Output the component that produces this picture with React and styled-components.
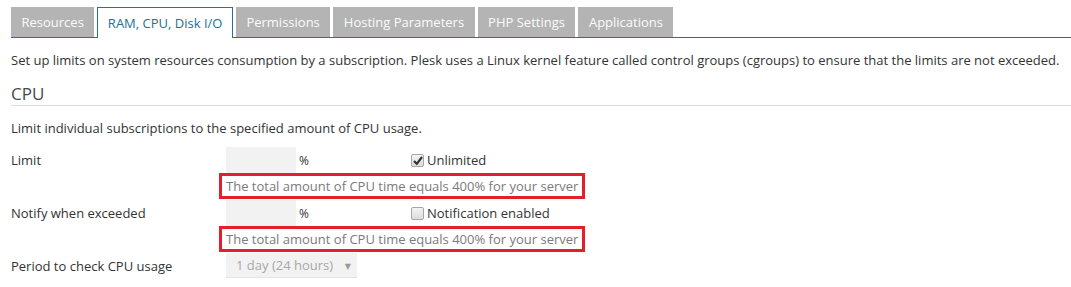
import React from 'react';
import styled, { createGlobalStyle } from 'styled-components';

const GlobalStyle = createGlobalStyle`
	body {
		margin: 0;
		background: #fff;
		font-family: "Open Sans", "DejaVu Sans", sans-serif;
		font-size: 13px;
		color: #333;
	}
`;

const Page = styled.div`
	padding: 7px 0 0 11px;
`;

const TabBar = styled.div`
	display: flex;
	gap: 3px;
	border-bottom: 1px solid #24729c;
	height: 30px;
`;

const Tab = styled.div`
	box-sizing: border-box;
	display: flex;
	align-items: center;
	font-size: 13px;
	white-space: nowrap;
	background: ${({ active }) => (active ? '#fff' : '#b4b4b4')};
	color: ${({ active }) => (active ? '#21709a' : '#fbfbfb')};
	border: ${({ active }) => (active ? '1px solid #24729c' : 'none')};
	border-bottom: none;
	height: ${({ active }) => (active ? '31px' : '30px')};
	padding: ${({ active }) => (active ? '0 9.5px' : '0 10.5px')};
`;

const Intro = styled.p`
	margin: 13px 0 0;
	line-height: 18px;
`;

const Heading = styled.h2`
	margin: 13px 0 0;
	font-size: 17px;
	font-weight: 400;
	line-height: 23px;
	color: #4a4a4a;
	border-bottom: 1px solid #ddd;
`;

const Lead = styled.p`
	margin: 13px 0 0;
	line-height: 18px;
`;

const Form = styled.div`
	margin-top: 10px;
	display: grid;
	grid-template-columns: 215px 1fr;
	row-gap: 1px;
`;

const Label = styled.div`
	line-height: 26px;
`;

const Field = styled.div`
	display: flex;
	flex-direction: column;
	align-items: flex-start;
`;

const Line = styled.div`
	display: flex;
	align-items: center;
	height: 26px;
`;

const Unit = styled.div`
	width: 185px;
	display: flex;
	align-items: center;
`;

const NumberBox = styled.div`
	width: 70px;
	height: 26px;
	background: #f2f2f2;
`;

const Suffix = styled.span`
	margin-left: 3px;
	font-size: 12px;
	color: #333;
`;

const Check = styled.label`
	display: flex;
	align-items: center;
	gap: 3px;
	color: #333;
`;

const Box = styled.span`
	width: 13px;
	height: 13px;
	box-sizing: border-box;
	border: 1px solid #a6a6a6;
	border-radius: 2px;
	background: linear-gradient(#f4f4f4, #dcdcdc);
	display: flex;
	align-items: center;
	justify-content: center;
`;

const Hint = styled.div`
	margin-left: -7px;
	border: 3px solid #e3202a;
	padding: 1px 4px 0 4px;
	line-height: 19px;
	color: #7a7a7a;
	white-space: nowrap;
`;

const Select = styled.div`
	width: 131px;
	height: 25px;
	box-sizing: border-box;
	background: #f2f2f2;
	border-bottom: 1px solid #e4e4e4;
	display: flex;
	align-items: center;
	justify-content: space-between;
	padding: 0 6px 0 10px;
	color: #a8a8a8;
`;

const Arrow = styled.span`
	font-size: 8px;
	color: #9a9a9a;
`;

const Checkbox = ({ checked, children }) => (
	<Check>
		<Box>
			{checked && (
				<svg width="10" height="9" viewBox="0 0 10 9">
					<path d="M1 5 L3.8 7.8 L9 1" fill="none" stroke="#333" strokeWidth="2.2" />
				</svg>
			)}
		</Box>
		{children}
	</Check>
);

const tabs = [
	'Resources',
	'RAM, CPU, Disk I/O',
	'Permissions',
	'Hosting Parameters',
	'PHP Settings',
	'Applications',
];

const hintText = 'The total amount of CPU time equals 400% for your server';

export default function App() {
	return (
		<Page>
			<GlobalStyle />
			<TabBar>
				{tabs.map((t) => (
					<Tab key={t} active={t === 'RAM, CPU, Disk I/O'}>{t}</Tab>
				))}
			</TabBar>
			<Intro>
				Set up limits on system resources consumption by a subscription. Plesk uses a Linux kernel feature called control groups (cgroups) to ensure that the limits are not exceeded.
			</Intro>
			<Heading>CPU</Heading>
			<Lead>Limit individual subscriptions to the specified amount of CPU usage.</Lead>
			<Form>
				<Label>Limit</Label>
				<Field>
					<Line>
						<Unit>
							<NumberBox />
							<Suffix>%</Suffix>
						</Unit>
						<Checkbox checked>Unlimited</Checkbox>
					</Line>
					<Hint>{hintText}</Hint>
				</Field>
				<Label>Notify when exceeded</Label>
				<Field>
					<Line>
						<Unit>
							<NumberBox />
							<Suffix>%</Suffix>
						</Unit>
						<Checkbox>Notification enabled</Checkbox>
					</Line>
					<Hint>{hintText}</Hint>
				</Field>
				<Label>Period to check CPU usage</Label>
				<Field>
					<Select>
						<span>1 day (24 hours)</span>
						<Arrow>▼</Arrow>
					</Select>
				</Field>
			</Form>
		</Page>
	);
}
